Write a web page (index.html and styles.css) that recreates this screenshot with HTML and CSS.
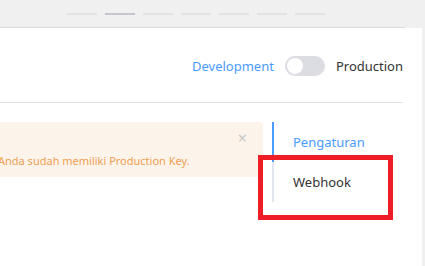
FILE: index.html
```html
<!DOCTYPE html>
<html lang="id">
<head>
    <meta charset="UTF-8">
    <meta name="viewport" content="width=device-width, initial-scale=1.0">
    <title>Pengaturan</title>
    <link rel="stylesheet" href="styles.css">
</head>
<body>
    <div class="topbar">
        <span class="dash"></span>
        <span class="dash active"></span>
        <span class="dash"></span>
        <span class="dash"></span>
        <span class="dash"></span>
        <span class="dash"></span>
        <span class="dash"></span>
    </div>
    <div class="topline"></div>

    <div class="panel">
        <div class="env-row">
            <span class="env dev">Development</span>
            <span class="switch"><span class="knob"></span></span>
            <span class="env prod">Production</span>
        </div>

        <div class="content">
            <div class="alert">
                <span class="close">&times;</span>
                <p class="alert-text">Anda sudah memiliki Production Key.</p>
            </div>

            <nav class="side-nav">
                <a href="#" class="nav-item active">Pengaturan</a>
                <a href="#" class="nav-item">Webhook</a>
                <div class="highlight"></div>
            </nav>
        </div>
    </div>
</body>
</html>
```

FILE: styles.css
```css
body {
    margin: 0;
    background-color: #f0f0f0;
    font-family: "Noto Sans", "Open Sans", sans-serif;
    color: #333;
    overflow: hidden;
}

.topbar {
    height: 27px;
    display: flex;
    align-items: center;
    gap: 8px;
    padding-left: 67px;
}

.dash {
    width: 30px;
    height: 2px;
    background-color: #e2e2e6;
}

.dash.active {
    background-color: #c3c7cc;
}

.topline {
    width: 405px;
    height: 1px;
    background-color: #dcdcdc;
}

.panel {
    width: 422px;
    height: 238px;
    background-color: #fff;
}

.env-row {
    width: 403px;
    height: 75px;
    border-bottom: 1px solid #e2e2e2;
    display: flex;
    align-items: center;
    justify-content: flex-end;
    box-sizing: border-box;
    padding-top: 1px;
}

.env {
    font-size: 13px;
}

.env.dev {
    color: #4a9bff;
}

.switch {
    width: 40px;
    height: 20px;
    border-radius: 10px;
    background-color: #dcdde3;
    margin: 0 11px 0 11px;
    display: flex;
    align-items: center;
    padding-left: 2px;
    box-sizing: border-box;
}

.knob {
    width: 16px;
    height: 16px;
    border-radius: 50%;
    background-color: #fff;
}

.content {
    display: flex;
    padding-top: 19px;
}

.alert {
    width: 263px;
    height: 55px;
    background-color: #fcf4ea;
    border-radius: 0 4px 4px 0;
    position: relative;
    box-sizing: border-box;
    padding-top: 31px;
}

.alert-text {
    margin: 0 0 0 -2px;
    font-size: 11px;
    color: #eea052;
}

.close {
    position: absolute;
    top: 8px;
    right: 16px;
    font-size: 16px;
    line-height: 16px;
    color: #c8c8c8;
}

.side-nav {
    margin-left: 9px;
    position: relative;
    display: flex;
    flex-direction: column;
}

.nav-item {
    display: block;
    height: 40px;
    line-height: 40px;
    padding-left: 19px;
    font-size: 13px;
    color: #333;
    text-decoration: none;
    border-left: 2px solid #e2e6ee;
}

.nav-item.active {
    color: #4a9bff;
    border-left-color: #4a9bff;
}

.highlight {
    position: absolute;
    left: -14px;
    top: 33px;
    width: 125px;
    height: 55px;
    border: 5px solid #ee1c25;
}
```
